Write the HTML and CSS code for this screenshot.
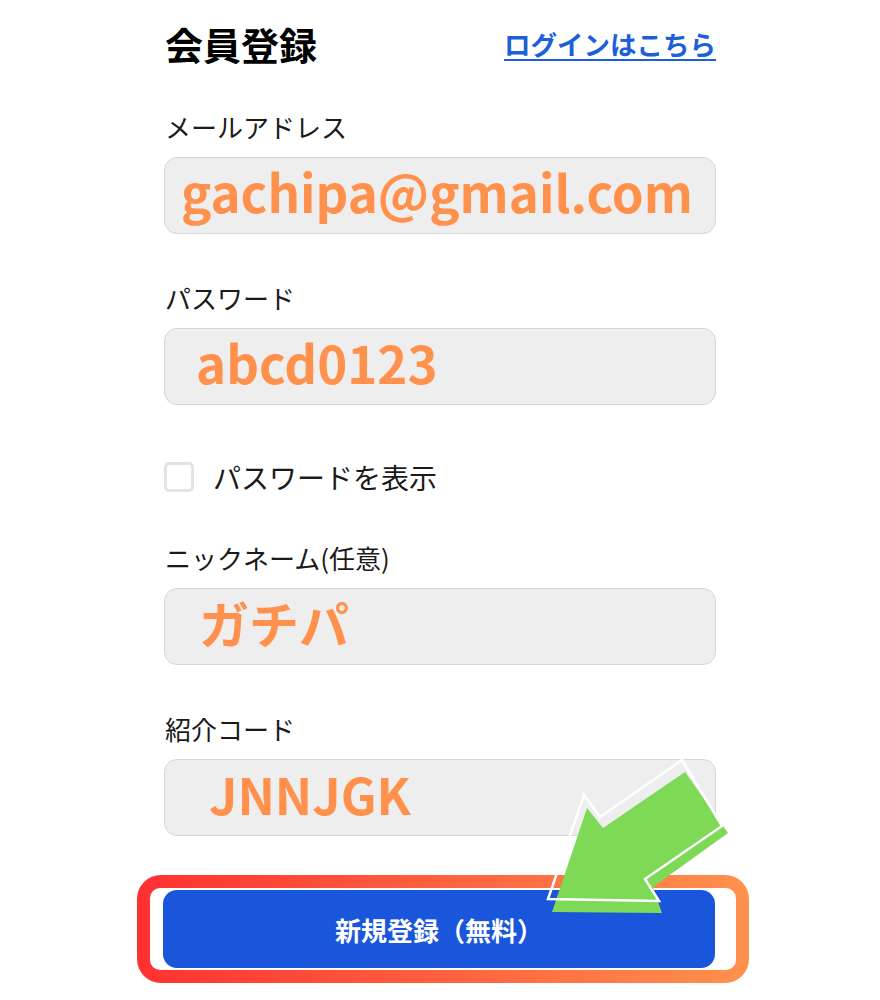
FILE: index.html
```html
<!DOCTYPE html>
<html lang="ja">
<head>
<meta charset="utf-8">
<title>会員登録</title>
<link rel="stylesheet" href="styles.css">
</head>
<body>
<main class="page">
  <div class="form">
    <header class="head">
      <h1 class="title">会員登録</h1>
      <a class="login-link" href="#">ログインはこちら</a>
    </header>

    <div class="field field-first">
      <div class="label">メールアドレス</div>
      <div class="input input-email">gachipa@gmail.com</div>
    </div>

    <div class="field">
      <div class="label">パスワード</div>
      <div class="input input-pass">abcd0123</div>
    </div>

    <label class="check-row">
      <span class="checkbox"></span>
      <span class="check-label">パスワードを表示</span>
    </label>

    <div class="field field-after-check">
      <div class="label">ニックネーム(任意)</div>
      <div class="input input-nick">ガチパ</div>
    </div>

    <div class="field">
      <div class="label">紹介コード</div>
      <div class="input input-code">JNNJGK</div>
    </div>
  </div>

  <div class="cta-frame">
    <div class="cta-inner">
      <button class="cta" type="button">新規登録（無料）</button>
    </div>
  </div>

  <svg class="arrow" viewBox="540 750 200 170" width="200" height="170" aria-hidden="true">
    <polygon points="552,912 587,808 603,828 685,772 728,833 653,887 662,913" fill="#7ed957"/>
    <polygon points="548,899 584,795 600,817 682,760 722,826 645,879 659,901" fill="none" stroke="#ffffff" stroke-width="2.5" stroke-linejoin="miter"/>
  </svg>
</main>
</body>
</html>
```

FILE: styles.css
```css
html, body {
  margin: 0;
  padding: 0;
  background: #ffffff;
}

body {
  font-family: "Noto Sans CJK JP", "Noto Sans", sans-serif;
  color: #1a1a1a;
}

.page {
  position: relative;
  width: 880px;
  height: 1000px;
  overflow: hidden;
}

.form {
  width: 552px;
  margin-left: 164px;
  padding-top: 19px;
  display: flex;
  flex-direction: column;
}

.head {
  height: 50px;
  display: flex;
  align-items: center;
  justify-content: space-between;
}

.title {
  margin: 0 0 0 1px;
  font-size: 38px;
  font-weight: 700;
  line-height: 50px;
  color: #000000;
}

.login-link {
  font-size: 26.5px;
  font-weight: 700;
  line-height: 50px;
  color: #1c5fd9;
  text-decoration: underline;
  text-decoration-thickness: 2px;
  text-underline-offset: 4px;
}

.field {
  display: flex;
  flex-direction: column;
  margin-top: 49px;
}

.field-first {
  margin-top: 43px;
}

.field-after-check {
  margin-top: 51px;
}

.label {
  font-size: 26px;
  line-height: 30px;
  height: 30px;
  margin-left: 1px;
  margin-bottom: 15px;
  color: #1a1a1a;
}

.input {
  box-sizing: border-box;
  height: 77px;
  background: #eeeeee;
  border: 1.5px solid #d6d6d6;
  border-radius: 13px;
  color: #ff914d;
  font-weight: 700;
  font-size: 51px;
  line-height: 66px;
  white-space: nowrap;
}

.input-email {
  padding-left: 16px;
}

.input-pass {
  padding-left: 31px;
}

.input-nick {
  padding-left: 34px;
  font-size: 50px;
}

.input-code {
  padding-left: 44px;
  font-size: 50px;
}

.check-row {
  display: flex;
  align-items: center;
  gap: 19px;
  margin-top: 57px;
  height: 30px;
}

.checkbox {
  box-sizing: border-box;
  width: 30px;
  height: 30px;
  border: 3px solid #e3e3e3;
  border-radius: 5px;
  background: #ffffff;
}

.check-label {
  font-size: 28px;
  line-height: 30px;
  color: #1a1a1a;
}

.cta-frame {
  box-sizing: border-box;
  width: 612px;
  margin-left: 137px;
  margin-top: 39px;
  padding: 13px;
  border-radius: 24px;
  background: linear-gradient(90deg, #ff3131 0%, #ff914d 100%);
}

.cta-inner {
  background: #ffffff;
  border-radius: 10px;
  padding: 2px 21px 2px 13px;
}

.cta {
  display: block;
  width: 552px;
  height: 78px;
  border: none;
  border-radius: 14px;
  background: #1a56db;
  color: #ffffff;
  font-family: "Noto Sans CJK JP", "Noto Sans", sans-serif;
  font-size: 26px;
  font-weight: 700;
  padding: 0;
}

.arrow {
  position: absolute;
  left: 540px;
  top: 750px;
  width: 200px;
  height: 170px;
}
```
